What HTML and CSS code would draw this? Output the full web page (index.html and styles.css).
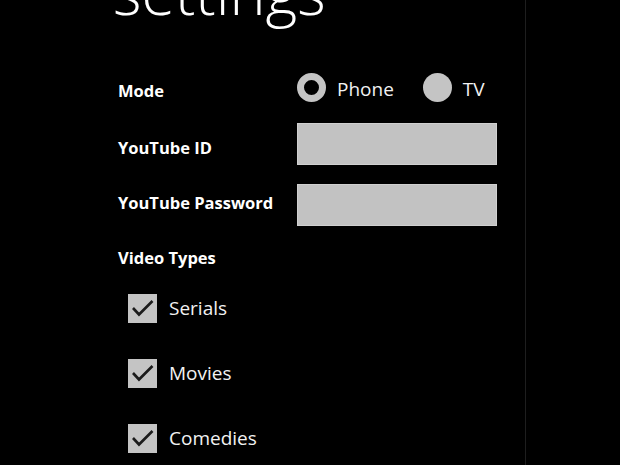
FILE: index.html
```html
<!doctype html>
<html lang="en">
<head>
    <meta charset="UTF-8">
    <meta name="viewport" content="width=device-width, initial-scale=1">
    <title>Settings</title>
    <link rel="stylesheet" href="styles.css">
</head>
<body>
<div class="page">
    <div class="title">settings</div>

    <div class="row row-mode">
        <div class="label">Mode</div>
        <div class="radios">
            <span class="radio radio-on"></span>
            <span class="radio-text">Phone</span>
            <span class="radio radio-off"></span>
            <span class="radio-text">TV</span>
        </div>
    </div>

    <div class="row row-field row-id">
        <div class="label">YouTube ID</div>
        <div class="field"></div>
    </div>

    <div class="row row-field row-pass">
        <div class="label">YouTube Password</div>
        <div class="field"></div>
    </div>

    <div class="row row-types">
        <div class="label">Video Types</div>
    </div>

    <div class="check-row">
        <span class="check">
            <svg width="29" height="29" viewBox="0 0 29 29"><path d="M5 14 L11 20.5 L24.5 7" fill="none" stroke="#1c1c1c" stroke-width="2.6"/></svg>
        </span>
        <span class="check-text">Serials</span>
    </div>
    <div class="check-row">
        <span class="check">
            <svg width="29" height="29" viewBox="0 0 29 29"><path d="M5 14 L11 20.5 L24.5 7" fill="none" stroke="#1c1c1c" stroke-width="2.6"/></svg>
        </span>
        <span class="check-text">Movies</span>
    </div>
    <div class="check-row">
        <span class="check">
            <svg width="29" height="29" viewBox="0 0 29 29"><path d="M5 14 L11 20.5 L24.5 7" fill="none" stroke="#1c1c1c" stroke-width="2.6"/></svg>
        </span>
        <span class="check-text">Comedies</span>
    </div>
</div>
</body>
</html>
```
FILE: styles.css
```css
html, body {
    margin: 0;
    padding: 0;
    background: #000;
}
body {
    font-family: "Open Sans", "Noto Sans", sans-serif;
    color: #f2f2f2;
    overflow: hidden;
}
.page {
    display: flow-root;
    width: 526px;
    height: 465px;
    border-right: 1px solid #1e1e1e;
    padding-left: 118px;
    box-sizing: border-box;
}
.title {
    font-size: 61px;
    font-weight: 300;
    line-height: 60px;
    margin-top: -38px;
    margin-left: -5px;
    color: #fff;
}
.row {
    display: flex;
    align-items: center;
    height: 42px;
}
.label {
    width: 179px;
    font-size: 16.5px;
    font-weight: 700;
    padding-top: 3px;
    color: #fff;
    white-space: nowrap;
}
.row-mode {
    margin-top: 46px;
}
.row-field {
    margin-top: 13px;
}
.row-id .label {
    padding-top: 7px;
}
.row-pass {
    margin-top: 19px;
}
.row-pass .label {
    padding-top: 0;
    padding-bottom: 5px;
}
.row-types {
    height: 30px;
    margin-top: 15px;
}
.radios {
    display: flex;
    align-items: center;
}
.radio {
    width: 29px;
    height: 29px;
    border-radius: 50%;
    box-sizing: border-box;
    margin-top: -3px;
}
.radio-on {
    border: 7.5px solid #c4c4c4;
}
.radio-off {
    background: #c4c4c4;
}
.radio-text {
    font-size: 19px;
    margin-left: 11px;
    margin-right: 29px;
}
.field {
    width: 200px;
    height: 42px;
    background: #c2c2c2;
    border: 1px solid #d0d0d0;
    box-sizing: border-box;
}
.check-row {
    display: flex;
    align-items: center;
    height: 30px;
    margin-top: 22px;
    padding-left: 10px;
}
.check-row + .check-row {
    margin-top: 35px;
}
.check {
    width: 29px;
    height: 29px;
    background: #c4c4c4;
    display: flex;
}
.check-text {
    font-size: 19px;
    margin-left: 12px;
}
```
